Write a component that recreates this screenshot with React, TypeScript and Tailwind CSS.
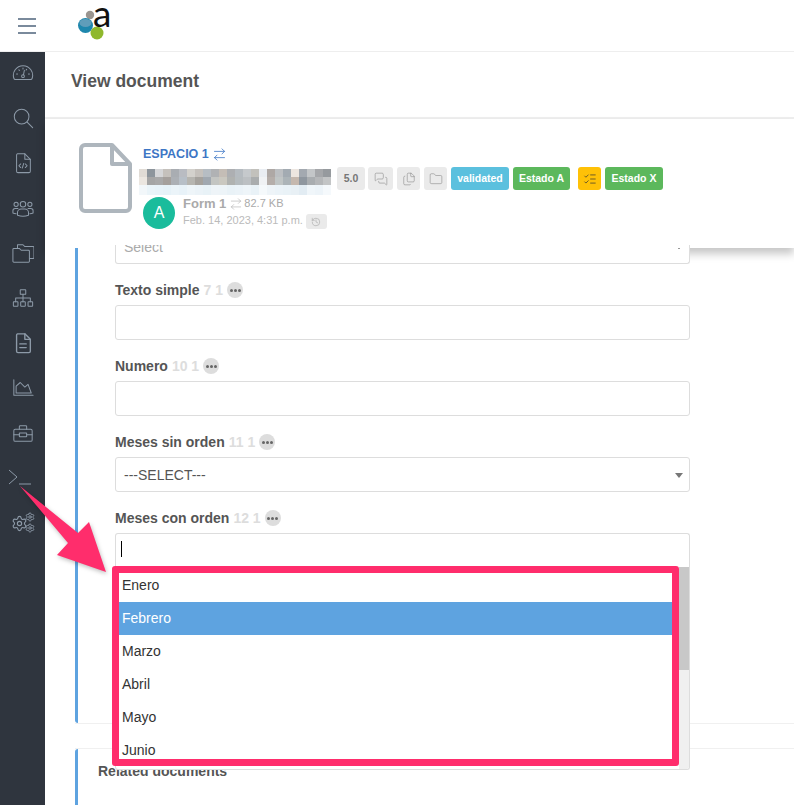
import {
  ArrowRightLeft,
  Files,
  Folder,
  History,
  ListChecks,
  MessagesSquare,
  Settings,
} from "lucide-react";

const months = ["Enero", "Febrero", "Marzo", "Abril", "Mayo", "Junio"];

const mosaic = [
  ["#e0dbd5", "#8d959c", "#d5d6d8", "#c5c1bc", "#a9adb2", "#b9bcc2", "#d3d1cc", "#c5c1bc", "#b6bdc3", "#b0b2b4", "#c4bdb6", "#adafb2", "#b5bbc0", "#c5c9cc", "#c2c1bc", "#e9edf2", "#aea8a5", "#bcbfc2", "#a3abb2", "#ede6e0", "#a3a9b0", "#c3c6c8", "#a5a7aa", "#969a9e"],
  ["#ebe6e0", "#a5a5a5", "#a9a9a9", "#a5a09c", "#acb0b5", "#b7bfc7", "#b6b5b0", "#a5a29d", "#a0a8b0", "#c3c5c2", "#cac8c0", "#b0b2b0", "#b5bbbe", "#bcc0c3", "#aaadae", "#f0f2f4", "#b5aeaa", "#c0c5c5", "#acb4b8", "#c5b8ae", "#8f979f", "#a9adb0", "#b5b7b9", "#c3c5c6"],
  ["#f2f7fa", "#eaf4f9", "#e8f3f9", "#e6f2f8", "#ebf4f9", "#e8f2f8", "#eef5f9", "#ebf3f8", "#e8f2f7", "#eef4f8", "#edf4f8", "#e9f2f7", "#ebf3f8", "#eef5f9", "#e9f2f7", "#f5f9fb", "#eef4f8", "#ebf3f8", "#e9f2f7", "#e8f0f5", "#e2ecf3", "#f0f6fa", "#edf4f9", "#f5f9fc"],
];

function NavSvg({ children }: { children: React.ReactNode }) {
  return (
    <svg width="22" height="22" viewBox="0 0 24 24" fill="none" stroke="currentColor" strokeWidth="1.1" strokeLinecap="round" strokeLinejoin="round">
      {children}
    </svg>
  );
}

const navIcons = [
  <NavSvg>
    <path d="M3.500 19h17a1.500 1.500 0 0 0 1.400-1 10.500 10.500 0 1 0-19.800 0 1.500 1.500 0 0 0 1.400 1z" />
    <path d="M5 13h1M18 13h1M7.500 8.500l.6.6M12 6.500v1M16 8l-.6.8" />
    <path d="M13.500 9l-1 5" />
    <circle cx="12" cy="15.500" r="1.500" />
  </NavSvg>,
  <NavSvg>
    <circle cx="10.500" cy="10.500" r="8" />
    <path d="M16.500 16.500l6 6" />
  </NavSvg>,
  <NavSvg>
    <path d="M6 2h8l6 6v13a1.500 1.500 0 0 1-1.500 1.500h-12A1.500 1.500 0 0 1 5 21V3.500A1.500 1.500 0 0 1 6 2z" />
    <path d="M14 2v6h6" />
    <path d="M9.500 13l-2 2 2 2M14.500 13l2 2-2 2M12.800 12.500l-1.600 5" />
  </NavSvg>,
  <NavSvg>
    <circle cx="12" cy="8" r="3" />
    <circle cx="4.500" cy="8" r="2.300" />
    <circle cx="19.500" cy="8" r="2.300" />
    <path d="M6 20v-3a4 4 0 0 1 4-4h4a4 4 0 0 1 4 4v3q-6 2-12 0z" />
    <path d="M6.500 12.500H3.500A2.500 2.500 0 0 0 1 15v2.500q1.500 .8 3.500 .8" />
    <path d="M17.500 12.500h3A2.500 2.500 0 0 1 23 15v2.500q-1.500 .8-3.500 .8" />
  </NavSvg>,
  <NavSvg>
    <path d="M6 7V3h6l2 2h9a1 1 0 0 1 1 1v11a1 1 0 0 1-1 1h-4" />
    <path d="M1 8a1 1 0 0 1 1-1h6l2 2h8a1 1 0 0 1 1 1v11a1 1 0 0 1-1 1H2a1 1 0 0 1-1-1z" />
  </NavSvg>,
  <NavSvg>
    <rect x="9" y="3" width="6" height="5" rx="0.5" />
    <rect x="1.500" y="16" width="5" height="5" rx="0.5" />
    <rect x="9.500" y="16" width="5" height="5" rx="0.5" />
    <rect x="17.500" y="16" width="5" height="5" rx="0.5" />
    <path d="M12 8v8M4 16v-4h16v4" />
  </NavSvg>,
  <NavSvg>
    <g strokeWidth="1.500">
      <path d="M6 2h8l6 6v13a1.500 1.500 0 0 1-1.500 1.500h-12A1.500 1.500 0 0 1 5 21V3.500A1.500 1.500 0 0 1 6 2z" />
      <path d="M14 2v6h6M8.500 13h7M8.500 17h7" />
    </g>
  </NavSvg>,
  <NavSvg>
    <path d="M2 3v17h21" />
    <path d="M4.500 17.500V10L9 6l5 5 3.500-3 3.500 9.500z" />
  </NavSvg>,
  <NavSvg>
    <rect x="2" y="8" width="20" height="13" rx="1.500" />
    <path d="M8 8V5a1 1 0 0 1 1-1h6a1 1 0 0 1 1 1v3M2 14h6M16 14h6" />
    <rect x="8" y="12" width="8" height="4" rx="0.5" />
  </NavSvg>,
  <svg className="mr-[5px]" width="24" height="18" viewBox="0 0 24 18" fill="none" stroke="currentColor" strokeWidth="1">
    <path d="M1 1l8 7-8 7" />
    <path d="M11 15h12" />
  </svg>,
  <svg width="24" height="22" viewBox="0 0 24 22" fill="none" color="currentColor">
    <Settings x={0} y={3} width={17} height={17} strokeWidth={1.6} />
    <Settings x={14} y={0} width={10} height={10} strokeWidth={2.2} />
    <Settings x={14} y={11} width={10} height={10} strokeWidth={2.2} />
  </svg>,
];

function Label({ name, nums }: { name: string; nums: string }) {
  return (
    <div className="flex h-5 items-center gap-1 text-sm font-bold text-[#555]">
      <span>{name}</span>
      <span className="text-[#ddd]">{nums}</span>
      <span className="flex h-4 w-4 items-center justify-center gap-px rounded-full bg-[#ddd]">
        <i className="h-[3px] w-[3px] rounded-full bg-[#666]" />
        <i className="h-[3px] w-[3px] rounded-full bg-[#666]" />
        <i className="h-[3px] w-[3px] rounded-full bg-[#666]" />
      </span>
    </div>
  );
}

function Chip({ children, className }: { children: React.ReactNode; className: string }) {
  return (
    <span className={`flex h-[23px] items-center justify-center rounded-[3px] text-[10.5px] font-bold ${className}`}>
      {children}
    </span>
  );
}

export default function App() {
  return (
    <div className="relative flex h-screen w-full flex-col overflow-hidden bg-white font-['Liberation_Sans',Arial,sans-serif]">
      {/* top bar */}
      <header className="flex h-[52px] shrink-0 items-center border-b border-[#eee]">
        <div className="flex w-[54px] shrink-0 flex-col items-center gap-[5px]">
          <i className="h-[2px] w-[18px] bg-[#7a8a9c]" />
          <i className="h-[2px] w-[18px] bg-[#7a8a9c]" />
          <i className="h-[2px] w-[18px] bg-[#7a8a9c]" />
        </div>
        <svg className="ml-[22px]" width="44" height="51" viewBox="0 0 44 51">
          <circle cx="14" cy="15" r="4.200" fill="#9a9590" />
          <circle cx="9.500" cy="25.500" r="7.500" fill="#1e87ad" />
          <ellipse cx="9.500" cy="23" rx="6" ry="4" fill="#5f9dba" />
          <circle cx="21" cy="33" r="6.500" fill="#8fb82c" />
          <text x="17" y="27" fontSize="37" fill="#111" fontFamily="Lato, sans-serif">a</text>
        </svg>
      </header>

      <div className="flex min-h-0 flex-1">
        <aside className="w-[45px] shrink-0 bg-[#2f353e] text-[#8d9aa8]">
          <div className="-mt-[2px]">
            {navIcons.map((icon, i) => (
              <div key={i} className="flex h-[45px] items-center justify-center">
                {icon}
              </div>
            ))}
          </div>
        </aside>

        <main className="min-w-0 flex-1">
          <div className="flex h-[67px] items-center border-b-2 border-[#eee] pl-[26px] pb-[6px] text-[17.5px] font-bold text-[#555]">
            View document
          </div>

          {/* document header */}
          <div className="flex h-[129px] items-start bg-white pl-[34px] pt-[24px] shadow-[0_6px_8px_rgba(0,0,0,0.22)]">
            <svg className="shrink-0" width="53" height="70" viewBox="0 0 53 70" fill="none" stroke="#aeb6bd" strokeWidth="4" strokeLinejoin="round">
              <path d="M6 2h27l18 19v43a4 4 0 0 1-4 4H6a4 4 0 0 1-4-4V6a4 4 0 0 1 4-4z" />
              <path d="M33 2v19h18" />
            </svg>
            <div className="ml-[11px]">
              <div className="mt-px flex items-center gap-[3px] text-[12.5px] font-bold leading-5 text-[#3d76c5]">
                ESPACIO 1 <ArrowRightLeft size={15} strokeWidth={1.3} />
              </div>
              <div className="-ml-[4px] mt-[3px] flex items-start">
                <svg width="192" height="28" viewBox="0 0 192 28" shapeRendering="crispEdges">
                  {mosaic.map((row, y) =>
                    row.map((c, x) => <rect key={`${x}-${y}`} x={x * 8} y={y * 8 + 2} width="8" height={y === 2 ? 10 : 8} fill={c} />),
                  )}
                </svg>
                <div className="ml-[6px] flex items-center gap-[4px] text-white">
                  <Chip className="w-[28px] bg-[#eaeaea] text-[#777]">5.0</Chip>
                  <Chip className="-ml-px w-[25px] bg-[#eaeaea] text-[#888]"><MessagesSquare size={14} strokeWidth={1} /></Chip>
                  <Chip className="w-[23px] bg-[#eaeaea] text-[#888]"><Files size={14} strokeWidth={1} /></Chip>
                  <Chip className="w-[23px] bg-[#eaeaea] text-[#888]"><Folder size={14} strokeWidth={1} /></Chip>
                  <Chip className="w-[58px] bg-[#5bc0de]">validated</Chip>
                  <Chip className="w-[57px] bg-[#5cb85c]">Estado A</Chip>
                  <Chip className="ml-[4px] w-[23px] bg-[#ffc107] text-[#333]"><ListChecks size={14} strokeWidth={1.2} /></Chip>
                  <Chip className="w-[58px] bg-[#5cb85c]">Estado X</Chip>
                </div>
              </div>
              <div className="mt-[2px] flex items-center">
                <span className="flex h-8 w-8 items-center justify-center rounded-full bg-[#1abc9c] text-base text-white">A</span>
                <div className="-mt-[3px] ml-2">
                  <div className="flex h-[17px] items-center gap-[3px] text-[13px] font-bold text-[#aaa]">
                    Form 1 <ArrowRightLeft size={14} strokeWidth={1} />
                    <span className="-ml-[2px] text-[11px] font-normal">82.7 KB</span>
                  </div>
                  <div className="flex h-[16px] items-center gap-[3px] text-[11px] text-[#bbb]">
                    Feb. 14, 2023, 4:31 p.m.
                    <span className="mt-[3px] flex h-[15px] w-[21px] items-center justify-center rounded-[3px] bg-[#eaeaea] text-[#999]">
                      <History size={10} strokeWidth={1.2} />
                    </span>
                  </div>
                </div>
              </div>
            </div>
          </div>

          {/* form */}
          <div className="relative z-10 -mt-[3px] ml-[30px] h-[479px] border-b border-[#f0f0f0]">
            <div className="h-full w-[615px] bg-white shadow-[-30px_0_0_#fff]">
              <div className="relative h-full rounded-bl-[3px] border-l-[3px] border-[#5ea3e0] pl-[37px]">
                <i className="absolute -left-[3px] top-0 h-[3px] w-[3px] bg-white" />
                <div className="relative h-[19px] overflow-hidden rounded-b-[3px] border-x border-b border-[#ddd] pl-2 text-sm leading-[5px] text-[#aaa]">
                  Select
                  <i className="absolute right-[9px] top-[3px] h-px w-[2px] bg-[#999]" />
                </div>

                <div className="mt-4">
                  <Label name="Texto simple" nums="7 1" />
                  <div className="mt-[5px] h-[35px] rounded-[3px] border border-[#ddd]" />
                </div>
                <div className="mt-4">
                  <Label name="Numero" nums="10 1" />
                  <div className="mt-[5px] h-[35px] rounded-[3px] border border-[#ddd]" />
                </div>
                <div className="mt-4">
                  <Label name="Meses sin orden" nums="11 1" />
                  <div className="relative mt-[5px] flex h-[35px] items-center rounded-[3px] border border-[#ddd] bg-white px-2 text-sm text-[#555]">
                    ---SELECT---
                    <span className="absolute right-[6px] top-[15px] border-x-4 border-t-[5px] border-x-transparent border-t-[#777]" />
                  </div>
                </div>
                <div className="mt-4">
                  <Label name="Meses con orden" nums="12 1" />
                  <div className="relative mt-[5px] h-[35px] rounded-t-[3px] border border-b-0 border-[#ddd] pl-[5px] pt-[7px]">
                    <i className="block h-4 w-px bg-black" />
                    {/* open listbox */}
                    <div className="absolute -left-px top-[33px] z-20 flex h-[203px] w-[575px] overflow-hidden rounded-b-[3px] border border-t-0 border-[#ddd] bg-white">
                      <ul className="flex-1 pt-[2px] text-sm text-[#333]">
                        {months.map((m) => (
                          <li key={m} className={`flex h-[33px] items-center px-[6px] pb-[2px] ${m === "Febrero" ? "bg-[#5ea3e0] text-white" : ""}`}>
                            {m}
                          </li>
                        ))}
                      </ul>
                      <div className="w-[10px] bg-[#f0f0f0]">
                        <div className="h-[103px] bg-[#c8c8c8]" />
                      </div>
                    </div>
                    {/* annotation frame */}
                    <div className="absolute -left-[4px] top-[32px] z-30 h-[200px] w-[567px] rounded-[3px] border-[7px] border-[#ff2d6c]" />
                  </div>
                </div>
              </div>
            </div>
          </div>

          {/* related documents */}
          <div className="ml-[30px] mt-[24px] h-[60px] border-t border-[#f0f0f0]">
            <div className="h-full rounded-tl-[3px] border-l-[3px] border-[#5ea3e0] pl-[20px] pt-[12px] text-sm font-bold text-[#555]">
              Related documents
            </div>
          </div>
        </main>
      </div>

      {/* annotation arrow */}
      <svg className="pointer-events-none absolute left-0 top-0 z-40" width="130" height="600" viewBox="0 0 130 600">
        <path d="M20 486L78 533L89 522L106 572L57 555L68 543Z" fill="#ff2d6c" className="drop-shadow-[1px_2px_2px_rgba(0,0,0,0.25)]" />
      </svg>
    </div>
  );
}
